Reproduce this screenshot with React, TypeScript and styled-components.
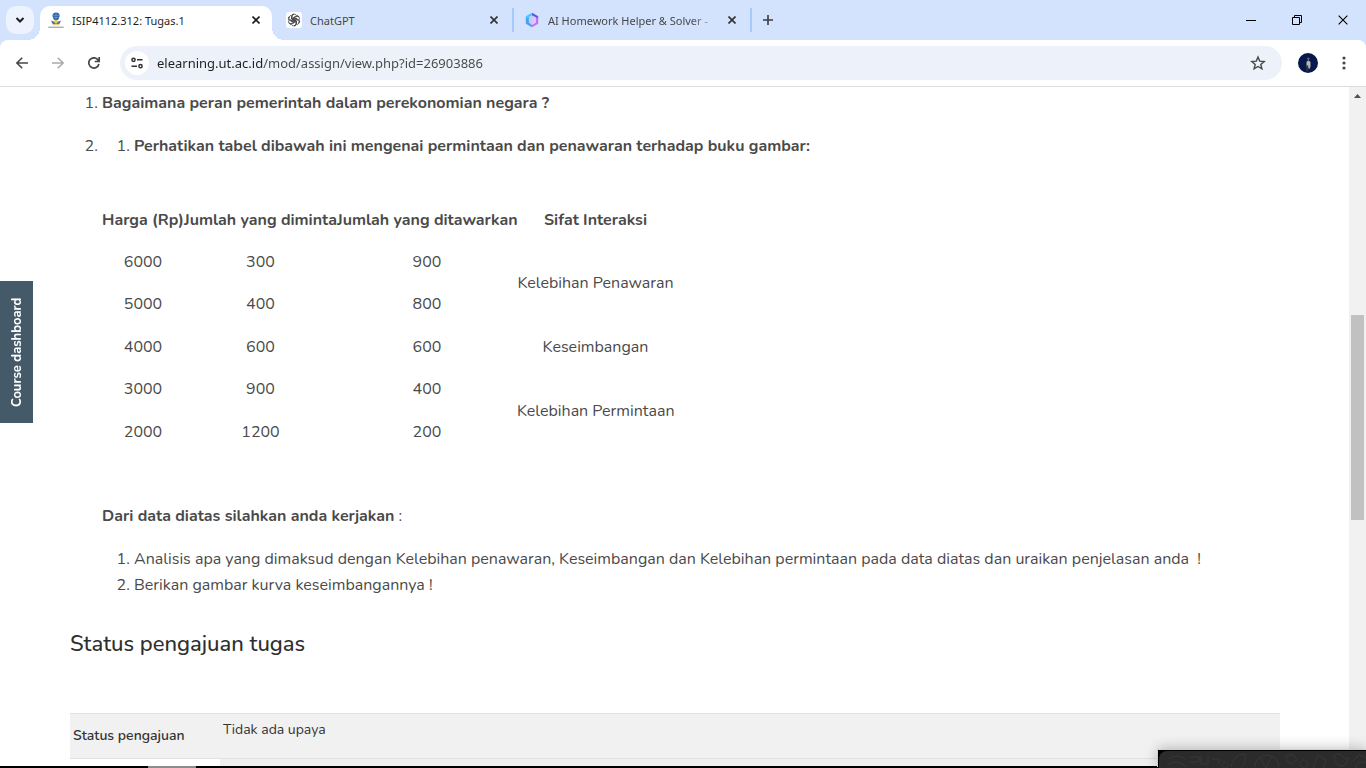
import React from "react";
import styled, { createGlobalStyle } from "styled-components";

const contentFont = `Nunito, Lato, "Noto Sans", sans-serif`;
const chromeFont = `"Segoe UI", "Noto Sans", "Open Sans", sans-serif`;

const GlobalStyle = createGlobalStyle`
  *, *::before, *::after { box-sizing: border-box; }
  body { margin: 0; background: #fff; color: #4a4a4a; }
  button, input { font: inherit; color: inherit; }
  button { border: 0; padding: 0; background: none; }
`;

const Window = styled.div`
  position: relative;
  display: flex;
  flex-direction: column;
  height: 100vh;
  overflow: hidden;
`;

const Browser = styled.header`
  flex: none;
  background: #d3e3fd;
  font-family: ${chromeFont};
  border-bottom: 1px solid #dadce0;
`;

const TabStrip = styled.div`
  display: flex;
  align-items: center;
  height: 40px;
  padding-left: 6px;
`;

const TabSearch = styled.button`
  display: grid;
  place-items: center;
  width: 28px;
  height: 28px;
  margin-right: 6px;
  border-radius: 10px;
  background: #ecf2fe;
`;

const Tab = styled.div`
  display: flex;
  align-items: center;
  width: 238px;
  height: 24px;
  padding: 0 10px;
  border-right: 2px solid #a8c7fa;
  color: #474747;
  font-size: 11px;
`;

const ActiveTab = styled(Tab)`
  position: relative;
  width: 232px;
  height: 34px;
  align-self: flex-end;
  margin-right: 4px;
  padding: 0 8px 6px;
  border: 0;
  border-radius: 10px 10px 0 0;
  background: #fff;
  color: #1f1f1f;

  &::before, &::after {
    content: "";
    position: absolute;
    bottom: 0;
    width: 12px;
    height: 12px;
  }
  &::before { left: -12px; background: radial-gradient(circle at 0 0, transparent 12px, #fff 12px); }
  &::after { right: -12px; background: radial-gradient(circle at 100% 0, transparent 12px, #fff 12px); }
`;

const TabTitle = styled.span<{ $fade?: boolean }>`
  flex: 1;
  min-width: 0;
  margin: 0 8px;
  white-space: nowrap;
  mask-image: ${(p) => (p.$fade ? "linear-gradient(to right, #000 85%, rgba(0, 0, 0, 0.2))" : "none")};
`;

const TabClose = styled.button`
  display: grid;
  place-items: center;
  width: 16px;
  height: 16px;
`;

const NewTab = styled.button`
  display: grid;
  place-items: center;
  width: 32px;
  height: 28px;
`;

const WindowButtons = styled.div`
  display: flex;
  margin-left: auto;
`;

const WindowButton = styled.button`
  display: grid;
  place-items: center;
  width: 46px;
  height: 40px;
`;

const Toolbar = styled.div`
  display: flex;
  align-items: center;
  height: 46px;
  padding: 0 4px;
  border-radius: 8px 8px 0 0;
  background: #fff;
`;

const ToolButton = styled.button`
  display: grid;
  place-items: center;
  width: 36px;
  height: 34px;
`;

const Omnibox = styled.div`
  flex: 1;
  display: flex;
  align-items: center;
  height: 34px;
  margin: 0 8px;
  padding: 0 6px 0 5px;
  border-radius: 17px;
  background: #edf1fa;
`;

const SiteInfo = styled.button`
  display: grid;
  place-items: center;
  width: 24px;
  height: 24px;
  border-radius: 50%;
  background: #fff;
`;

/* The host is darker than the path that follows it. */
const Address = styled.input`
  flex: 1;
  min-width: 0;
  height: 24px;
  margin-left: 8px;
  padding: 0;
  border: 0;
  outline: 0;
  background: linear-gradient(to right, #1f1f1f 107px, #474747 107px);
  background-clip: text;
  -webkit-text-fill-color: transparent;
  font-size: 13px;
`;

const Viewport = styled.div`
  flex: 1;
  min-height: 0;
  display: flex;
  position: relative;
`;

const Page = styled.main`
  flex: 1;
  min-width: 0;
  overflow: hidden;
  padding: 3px 69px 0 70px;
  font-family: ${contentFont};
  font-size: 16px;
  line-height: 26px;
`;

const List = styled.ol`
  margin: 0;
  padding-left: 32px;
`;

const Item = styled.li<{ $gap?: boolean }>`
  margin-bottom: ${(p) => (p.$gap ? 17 : 0)}px;
`;

const PriceTable = styled.table`
  table-layout: fixed;
  width: 572px;
  margin: 40px 0 50px;
  border-collapse: collapse;
  text-align: center;
  white-space: nowrap;

  th, td { height: 42px; padding: 0; }
  tbody tr:nth-child(2n + 3) td { height: 43px; }
`;

const Lead = styled.p`
  margin: 0 0 17px;
`;

const StatusHeading = styled.h3`
  margin: 30px 0 53px;
  color: #2e2e2e;
  font-size: 22px;
  font-weight: 500;
  line-height: 32px;
`;

const StatusTable = styled.table`
  width: 100%;
  border-collapse: collapse;
  color: #333;
  font-size: 14px;
  line-height: 20px;

  th, td {
    height: 45px;
    padding: 0 3px;
    border-top: 1px solid #dee2e6;
    text-align: left;
  }
  th { width: 150px; font-weight: 600; }
  td { padding-bottom: 12px; }
  tr:nth-child(odd) { background: #f1f1f1; }
  tr:nth-child(even) td { background: #efefef; }
`;

const Scrollbar = styled.div`
  flex: none;
  display: flex;
  flex-direction: column;
  align-items: center;
  width: 17px;
  background: #f1f1f1;
`;

const ScrollArrow = styled.svg`
  flex: none;
  margin-top: 6px;
`;

const ScrollThumb = styled.div`
  width: 13px;
  height: 205px;
  margin-top: 216px;
  background: #c1c1c1;
`;

const DashboardTab = styled.button`
  position: absolute;
  top: 194px;
  left: 0;
  width: 33px;
  height: 142px;
  background: #455a68;
  color: #fff;
  font-family: ${contentFont};
  font-size: 13px;
  font-weight: 700;
  line-height: 32px;
  writing-mode: vertical-rl;

  span { display: block; transform: rotate(180deg); }
`;

const Taskbar = styled.div`
  flex: none;
  height: 2px;
  padding-left: 148px;
  background: #000;
`;

const TaskbarItem = styled.div`
  width: 48px;
  height: 2px;
  background: #8c8c8c;
`;

const Popup = styled.aside`
  position: absolute;
  right: 0;
  bottom: 0;
  width: 208px;
  height: 18px;
  padding: 1px 0 0 1px;
  background: #000;
  box-shadow: -1px -1px 0 #d0d0d0, 0 -1px 14px rgba(0, 0, 0, 0.28);
`;

const PopupBody = styled.div`
  height: 17px;
  overflow: hidden;
  border-radius: 8px 0 0 0;
  background: #2b2b2b;
`;

const Cross = ({ size = 8, width = 1.6, color = "#303030" }) => (
  <svg width={size} height={size} viewBox="0 0 8 8" fill="none" stroke={color} strokeWidth={width}>
    <path d="M.5.5l7 7M7.5.5l-7 7" />
  </svg>
);

const UniversityIcon = () => (
  <svg width="16" height="16" viewBox="0 0 16 16">
    <path d="M4.5 3.4C4.5 1.4 6 .4 8 .4s3.6 1 3.6 3c0 2.2-1.2 4.2-2.4 4.9H6.9C5.7 7.6 4.5 5.6 4.5 3.4z" fill="#2c63a8" />
    <path d="M4.8 3.3h6.4M5.3 5.5h5.4M8 .8v7" stroke="#7ba6d6" strokeWidth=".6" />
    <path d="M3 8.5l5 1.7 5-1.7-1.5 3.500H4.500z" fill="#4e779b" />
    <path d="M6.6 8h2.800v2.500L8 12l-1.400-1.500z" fill="#e7c94b" />
    <path d="M4.5 12.200q3.500 1.600 7 0" fill="none" stroke="#d9bf55" strokeWidth="1" />
    <path d="M.3 15.200h15.400" stroke="#7192b0" strokeWidth="1" />
  </svg>
);

const ChatIcon = () => (
  <svg width="16" height="16" viewBox="0 0 16 16">
    <rect width="16" height="16" rx="3" fill="#fff" />
    <g fill="none" stroke="#333" strokeWidth=".8" strokeLinejoin="round">
      {[0, 60, 120, 180, 240, 300].map((a) => (
        <path key={a} transform={`rotate(${a} 8 8)`} d="M6.200 9V4.600Q6.200 2.300 8.300 2.200 9.500 2.200 10.300 3M7.600 8.200V5.400L10.600 3.700Q12.200 3.200 13.100 5" />
      ))}
    </g>
  </svg>
);

const HexIcon = () => (
  <svg width="16" height="16" viewBox="0 0 16 16">
    <path d="M8 .8L1.800 4.200v3.600L5 6V5l3-1.600z" fill="#3fcdf6" />
    <path d="M1.800 6.500v5.300L8 15.200v-2.700l-3-2.200V5.500z" fill="#4f9df5" />
    <path d="M8 .8l6.200 3.400v2.300L11.800 7V5.400L8 3.600z" fill="#5a55ee" />
    <path d="M14.200 5.500v6.300L8 15.200v-2.700l3.800-2.200V5.500z" fill="#c071f2" />
    <path d="M8 3.400l3.900 1.900v5.100L8 12.900l-3.200-2.500V5.300z" fill="#bccdfc" />
    <path d="M8 6.800l3.900-1.500v5.100L8 12.900z" fill="#e2c6fb" />
  </svg>
);

const prices: { price: string; demand: string; supply: string; note?: string; span?: number }[] = [
  { price: "6000", demand: "300", supply: "900", note: "Kelebihan Penawaran", span: 2 },
  { price: "5000", demand: "400", supply: "800" },
  { price: "4000", demand: "600", supply: "600", note: "Keseimbangan", span: 1 },
  { price: "3000", demand: "900", supply: "400", note: "Kelebihan Permintaan", span: 2 },
  { price: "2000", demand: "1200", supply: "200" },
];

export default function App() {
  return (
    <Window>
      <GlobalStyle />
      <Browser>
        <TabStrip>
          <TabSearch aria-label="Search tabs">
            <svg width="10" height="6" viewBox="0 0 10 6" fill="none" stroke="#1f1f1f" strokeWidth="2">
              <path d="M1.500 1L5 4.500 8.500 1" />
            </svg>
          </TabSearch>
          <ActiveTab>
            <UniversityIcon />
            <TabTitle>ISIP4112.312: Tugas.1</TabTitle>
            <TabClose aria-label="Close tab"><Cross color="#1f1f1f" /></TabClose>
          </ActiveTab>
          <Tab>
            <ChatIcon />
            <TabTitle>ChatGPT</TabTitle>
            <TabClose aria-label="Close tab"><Cross /></TabClose>
          </Tab>
          <Tab>
            <HexIcon />
            <TabTitle $fade>AI Homework Helper &amp; Solver -</TabTitle>
            <TabClose aria-label="Close tab"><Cross /></TabClose>
          </Tab>
          <NewTab aria-label="New tab">
            <svg width="10" height="10" viewBox="0 0 10 10" stroke="#3c3c3c" strokeWidth="1.600"><path d="M5 0v10M0 5h10" /></svg>
          </NewTab>
          <WindowButtons>
            <WindowButton aria-label="Minimize">
              <svg width="10" height="10" viewBox="0 0 10 10" stroke="#000"><path d="M0 5.500h10" /></svg>
            </WindowButton>
            <WindowButton aria-label="Restore">
              <svg width="10" height="10" viewBox="0 0 10 10" fill="none" stroke="#000"><path d="M.5 2.500h7v7h-7zM2.500 2.500v-2h7v7h-2" /></svg>
            </WindowButton>
            <WindowButton aria-label="Close"><Cross size={10} width={0.9} color="#000" /></WindowButton>
          </WindowButtons>
        </TabStrip>
        <Toolbar>
          <ToolButton aria-label="Back">
            <svg width="12" height="12" viewBox="0 0 12 12" fill="none" stroke="#474747" strokeWidth="1.600"><path d="M12 6H1M6.200.7L.9 6l5.300 5.300" /></svg>
          </ToolButton>
          <ToolButton aria-label="Forward">
            <svg width="12" height="12" viewBox="0 0 12 12" fill="none" stroke="#ababab" strokeWidth="1.600"><path d="M0 6h11M5.800.7L11.100 6l-5.300 5.300" /></svg>
          </ToolButton>
          <ToolButton aria-label="Reload">
            <svg width="12" height="12" viewBox="0 0 12 12" fill="none" stroke="#474747" strokeWidth="1.700"><path d="M10.900 7A5.100 5.100 0 1 1 9.800 2.600L11 4M11.200 0v4.500H6.700" /></svg>
          </ToolButton>
          <Omnibox>
            <SiteInfo aria-label="View site information">
              <svg width="12" height="12" viewBox="0 0 12 12" fill="none" stroke="#303030" strokeWidth="1.500">
                <circle cx="2.500" cy="2.800" r="1.600" /><path d="M6 2.800h5.500M.5 9.200H6" /><circle cx="9.500" cy="9.200" r="1.600" />
              </svg>
            </SiteInfo>
            <Address aria-label="Address" defaultValue="elearning.ut.ac.id/mod/assign/view.php?id=26903886" />
            <ToolButton aria-label="Bookmark this tab">
              <svg width="16" height="16" viewBox="0 0 16 16" fill="none" stroke="#474747" strokeWidth="1.400">
                <path d="M8 2l1.700 4.100 4.500.4-3.400 2.900 1.100 4.400L8 11.500l-3.900 2.300 1.100-4.400-3.400-2.900 4.500-.4z" />
              </svg>
            </ToolButton>
          </Omnibox>
          <ToolButton aria-label="Profile">
            <svg width="20" height="20" viewBox="0 0 20 20">
              <circle cx="10" cy="10" r="10" fill="#06194c" />
              <path d="M8.500 14V9l1.800-1.700L12.500 9v4.500L11.500 16z" fill="#b9b4b6" />
              <path d="M8.300 12.500h2v6h-2z" fill="#30303c" />
              <circle cx="10.300" cy="5.800" r="1.300" fill="#7e5b50" />
            </svg>
          </ToolButton>
          <ToolButton aria-label="Menu">
            <svg width="4" height="14" viewBox="0 0 4 14" fill="#474747"><circle cx="2" cy="2" r="1.600" /><circle cx="2" cy="7" r="1.600" /><circle cx="2" cy="12" r="1.600" /></svg>
          </ToolButton>
        </Toolbar>
      </Browser>
      <Viewport>
        <Page>
          <List>
            <Item $gap><strong>Bagaimana peran pemerintah dalam perekonomian negara ?</strong></Item>
            <Item>
              <List>
                <Item><strong>Perhatikan tabel dibawah ini mengenai permintaan dan penawaran terhadap buku gambar:</strong></Item>
              </List>
              <PriceTable>
                <colgroup>
                  <col width="82" /><col width="153" /><col width="180" /><col width="157" />
                </colgroup>
                <thead>
                  <tr><th>Harga (Rp)</th><th>Jumlah yang diminta</th><th>Jumlah yang ditawarkan</th><th>Sifat Interaksi</th></tr>
                </thead>
                <tbody>
                  {prices.map((r) => (
                    <tr key={r.price}>
                      <td>{r.price}</td><td>{r.demand}</td><td>{r.supply}</td>
                      {r.note && <td rowSpan={r.span}>{r.note}</td>}
                    </tr>
                  ))}
                </tbody>
              </PriceTable>
              <Lead><strong>Dari data diatas silahkan anda kerjakan</strong> :</Lead>
              <List>
                <Item>Analisis apa yang dimaksud dengan Kelebihan penawaran, Keseimbangan dan Kelebihan permintaan pada data diatas dan uraikan penjelasan anda&nbsp; !</Item>
                <Item>Berikan gambar kurva keseimbangannya !</Item>
              </List>
            </Item>
          </List>
          <StatusHeading>Status pengajuan tugas</StatusHeading>
          <StatusTable>
            <tbody>
              <tr><th scope="row">Status pengajuan</th><td>Tidak ada upaya</td></tr>
              <tr><th /><td /></tr>
            </tbody>
          </StatusTable>
        </Page>
        <Scrollbar>
          <ScrollArrow width="7" height="6" viewBox="0 0 7 6"><path d="M0 5l3.500-4L7 5z" fill="#505050" /></ScrollArrow>
          <ScrollThumb />
        </Scrollbar>
        <DashboardTab><span>Course dashboard</span></DashboardTab>
      </Viewport>
      <Taskbar><TaskbarItem /></Taskbar>
      <Popup>
        <PopupBody>
          <svg width="208" height="18" viewBox="0 0 208 18" fill="none" stroke="#383838">
            <path d="M10 8q8-6 16 0M8 14q10-7 20 2M31 6h9v5h-9M42 4v9h7V5M52 8h8v5M66 11a3 3 0 1 0 .1 0M72 16q2-12 14-13 2 9-4 14M96 16a12 12 0 0 1 24 0M101 6l6 11M113 5l-6 12M126 6l8-3 4 6-7 4zM145 9a4 4 0 1 0 .1 0M154 17l5-13 8 5-3 8M175 5q5-4 8 0t6 2q-1 8-7 8t-7-10M194 10l6-6 8 3M196 17q4-9 12-5" />
          </svg>
        </PopupBody>
      </Popup>
    </Window>
  );
}
